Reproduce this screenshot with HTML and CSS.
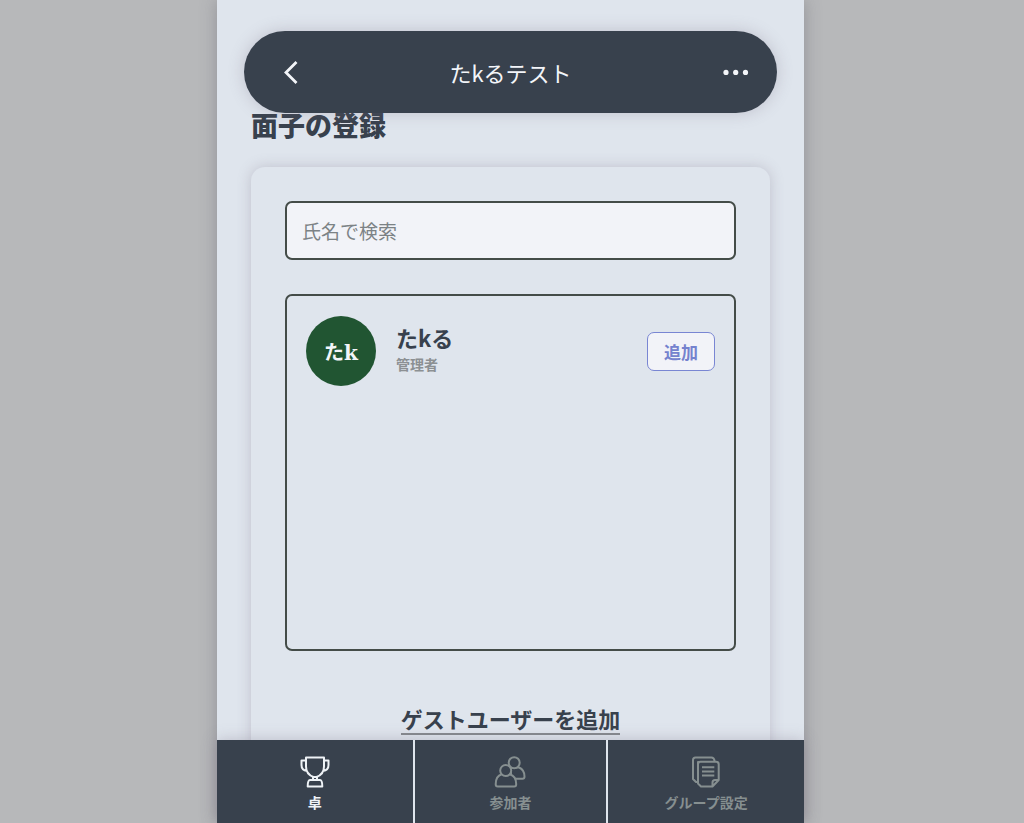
FILE: index.html
```html
<!DOCTYPE html>
<html lang="ja">
<head>
<meta charset="utf-8">
<meta name="viewport" content="width=device-width, initial-scale=1">
<title>面子の登録</title>
<link rel="stylesheet" href="styles.css">
</head>
<body>
<div class="app">
  <header class="topbar">
    <button class="icon-button" type="button" aria-label="戻る">
      <svg width="28" height="28" viewBox="0 0 28 28" fill="none" stroke="currentColor" stroke-width="2.8"><path d="M25.500 4 15 14.500l10.500 10.500"/></svg>
    </button>
    <p class="topbar-title">たkるテスト</p>
    <button class="icon-button" type="button" aria-label="メニュー">
      <svg width="28" height="28" viewBox="0 0 28 28" fill="currentColor"><circle cx="4" cy="14.400" r="2.600"/><circle cx="13.700" cy="14.400" r="2.600"/><circle cx="23.500" cy="14.400" r="2.600"/></svg>
    </button>
  </header>
  <main class="content">
    <h1 class="page-title">面子の登録</h1>
    <section class="card">
      <input class="search" type="search" placeholder="氏名で検索" aria-label="氏名で検索">
      <ul class="members">
        <li class="member">
          <span class="avatar">たk</span>
          <div class="member-info">
            <p class="member-name">たkる</p>
            <p class="member-role">管理者</p>
          </div>
          <button class="add-button" type="button">追加</button>
        </li>
      </ul>
      <a class="guest-link" href="#guest">ゲストユーザーを追加</a>
    </section>
  </main>
  <nav class="tabs">
    <a class="tab tab-active" href="#table">
      <svg class="tab-icon" width="32" height="32" viewBox="0 0 32 32"><path d="M7 4.500H2.500v4.500c0 3 2 5.500 5.500 6M25 4.500h4.500v4.500c0 3-2 5.500-5.500 6M7 1.500h18v9c0 5.500-3.500 9-7.500 10.500h-3C10.500 19.500 7 16 7 10.500zM14 21h4v3h-4zM11 24h10c1.500 0 2.300 3 2.300 6.500H8.700c0-3.500.8-6.500 2.300-6.500z"/></svg>
      <span>卓</span>
    </a>
    <a class="tab" href="#participants">
      <svg class="tab-icon" width="32" height="32" viewBox="0 0 32 32"><path d="M17 11.500h8c3.500 1.500 5.500 4.500 5.500 9 0 1.500-.7 2.200-2 2.200H17z"/><circle cx="20.200" cy="6.700" r="5.500"/><path d="M7.700 18.300c-4 1.200-6 4.700-6 10 0 1.500.7 2.200 2 2.200h16.500c1.300 0 2-.7 2-2.200 0-5.300-2-8.800-6.500-10z"/><circle cx="11.700" cy="14.500" r="5.500"/></svg>
      <span>参加者</span>
    </a>
    <a class="tab" href="#settings">
      <svg class="tab-icon" width="32" height="32" viewBox="0 0 32 32"><path d="M8 26H6l-3-3V4c0-1.500 1-2.500 2.500-2.500h16C23 1.500 24.500 3 24.500 5v1H8z"/><path d="M10.500 5.800h15.500c1.500 0 2.700 1 2.700 2.500v15.700l-6.200 6.500H11l-3-3V8.300c0-1.500 1-2.500 2.500-2.500zM28.700 24h-3.700c-1.500 0-2.500 1-2.500 2.500v4M12 11.300h12.300M12 15.400h12.300M12 19.500h12.300"/></svg>
      <span>グループ設定</span>
    </a>
  </nav>
</div>
</body>
</html>
```
FILE: styles.css
```css
* {
  box-sizing: border-box;
}

body {
  margin: 0;
  padding-right: 3px;
  background: #b7b8ba;
  color: #38414d;
  font-family: "Noto Sans CJK JP", sans-serif;
}

h1, p, ul {
  margin: 0;
  padding: 0;
}

button {
  font: inherit;
  cursor: pointer;
}

a {
  color: inherit;
  text-decoration: none;
}

.app {
  position: relative;
  display: flex;
  flex-direction: column;
  max-width: 587px;
  height: 100vh;
  margin: 0 auto;
  background: #dfe5ed;
  box-shadow: 0 0 16px rgba(90, 90, 100, 0.4);
}

.topbar {
  position: absolute;
  z-index: 1;
  top: 31px;
  left: 27px;
  right: 27px;
  display: flex;
  align-items: center;
  justify-content: space-between;
  padding: 27px;
  border-radius: 42px;
  background: #38414d;
  color: #f3f5f9;
  box-shadow: 0 0 16px rgba(120, 110, 130, 0.3);
}

.icon-button {
  display: flex;
  padding: 0;
  border: 0;
  background: none;
  color: inherit;
}

.topbar-title {
  font-size: 22px;
  line-height: 26px;
}

.content {
  flex: 1;
  min-height: 0;
  overflow: hidden;
  padding: 105px 34px 0;
}

.page-title {
  font-size: 27px;
  line-height: 40px;
  font-weight: 900;
}

.card {
  display: flex;
  flex-direction: column;
  align-items: center;
  gap: 34px;
  margin-top: 22px;
  padding: 34px;
  border-radius: 14px;
  box-shadow: 0 0 14px rgba(120, 110, 130, 0.3);
}

.search {
  width: 100%;
  height: 59px;
  padding: 0 15px;
  border: 2px solid #444c48;
  border-radius: 7px;
  background: #f2f3f8;
  color: inherit;
  font-family: inherit;
  font-size: 19px;
  appearance: none;
}

.search::placeholder {
  color: #7c8285;
}

.members {
  width: 100%;
  min-height: 357px;
  padding: 20px 19px;
  border: 2px solid #444c48;
  border-radius: 7px;
  list-style: none;
}

.member {
  display: flex;
  align-items: center;
  gap: 20px;
}

.avatar {
  display: grid;
  place-items: center;
  width: 70px;
  height: 70px;
  padding-top: 3px;
  border-radius: 50%;
  background: #215532;
  color: #f3f5f9;
  font-family: "DejaVu Serif", "Noto Sans CJK JP", serif;
  font-size: 20px;
  line-height: 30px;
  font-weight: 700;
}

.member-info {
  flex: 1;
  padding-bottom: 4px;
}

.member-name {
  font-size: 22px;
  line-height: 30px;
  font-weight: 700;
}

.member-role {
  color: #8c9093;
  font-size: 14px;
  line-height: 24px;
  font-weight: 700;
}

.add-button {
  padding: 6px 16px;
  border: 1px solid #7986d3;
  border-radius: 7px;
  background: #f2f3f8;
  color: #7582ce;
  font-size: 17px;
  line-height: 25px;
  font-weight: 700;
}

.guest-link {
  margin-top: 19px;
  border-bottom: 2px solid #85898e;
  font-size: 22px;
  line-height: 29px;
  font-weight: 700;
}

.tabs {
  position: relative;
  display: grid;
  grid-template-columns: repeat(3, 1fr);
  background: #38414d;
  box-shadow: 0 0 14px rgba(120, 110, 130, 0.35);
}

.tab {
  display: flex;
  flex-direction: column;
  align-items: center;
  gap: 4px;
  padding: 16px 0 11px;
  color: #868f90;
  font-size: 14px;
  line-height: 20px;
  font-weight: 700;
}

.tab:nth-child(2) {
  border: solid #dfe5ed;
  border-width: 0 2px;
}

.tab-active {
  color: #eef2f6;
}

.tab-icon {
  fill: #38414d;
  stroke: currentColor;
  stroke-width: 2;
  stroke-linejoin: round;
}
```
